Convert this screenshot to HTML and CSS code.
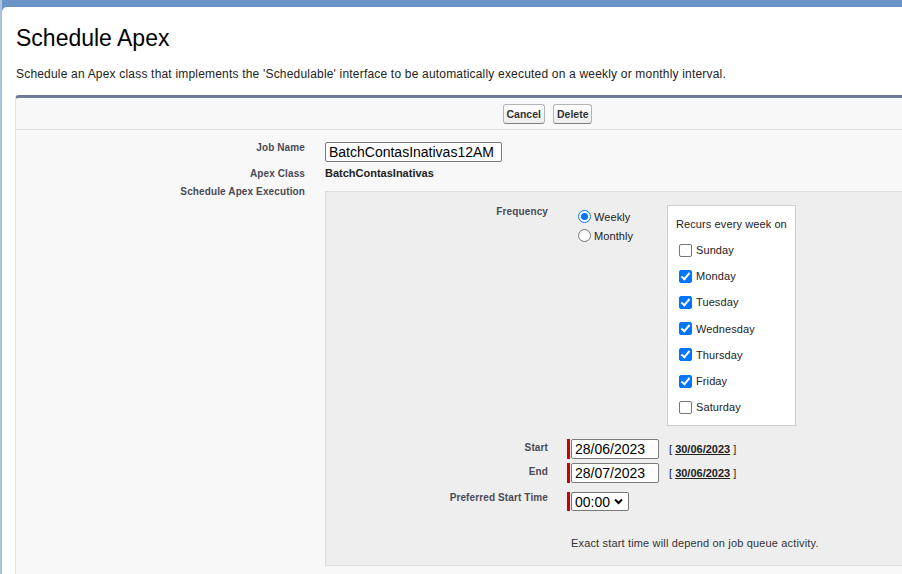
FILE: index.html
```html
<!DOCTYPE html>
<html>
<head>
<meta charset="utf-8">
<link rel="stylesheet" href="styles.css">
</head>
<body>
<div class="frame">
  <div class="page">
    <h1 class="title">Schedule Apex</h1>
    <p class="desc">Schedule an Apex class that implements the 'Schedulable' interface to be automatically executed on a weekly or monthly interval.</p>
    <div class="block">
      <div class="btn-row">
        <button class="btn">Cancel</button>
        <button class="btn">Delete</button>
      </div>
      <div class="form">
        <div class="lbl row-job">Job Name</div>
        <div class="data row-job"><input class="txt job" type="text" value="BatchContasInativas12AM"></div>
        <div class="lbl row-class">Apex Class</div>
        <div class="data row-class"><span class="val">BatchContasInativas</span></div>
        <div class="lbl row-exec">Schedule Apex Execution</div>
        <div class="data row-exec">
          <div class="exec">
            <div class="ilbl freq-lbl">Frequency</div>
            <div class="idata freq">
              <div class="radios">
                <label class="radio"><span class="rb on"></span>Weekly</label>
                <label class="radio"><span class="rb"></span>Monthly</label>
              </div>
              <div class="recurs">
                <div class="recurs-title">Recurs every week on</div>
                <label class="day"><span class="cb"></span>Sunday</label>
                <label class="day"><span class="cb on"></span>Monday</label>
                <label class="day"><span class="cb on"></span>Tuesday</label>
                <label class="day"><span class="cb on"></span>Wednesday</label>
                <label class="day"><span class="cb on"></span>Thursday</label>
                <label class="day"><span class="cb on"></span>Friday</label>
                <label class="day"><span class="cb"></span>Saturday</label>
              </div>
            </div>
            <div class="ilbl start-lbl">Start</div>
            <div class="idata dated start">
              <span class="req"></span><input class="txt date" type="text" value="28/06/2023">
              <span class="today">[&nbsp;<a href="#">30/06/2023</a>&nbsp;]</span>
            </div>
            <div class="ilbl end-lbl">End</div>
            <div class="idata dated end">
              <span class="req"></span><input class="txt date" type="text" value="28/07/2023">
              <span class="today">[&nbsp;<a href="#">30/06/2023</a>&nbsp;]</span>
            </div>
            <div class="ilbl time-lbl">Preferred Start Time</div>
            <div class="idata dated time">
              <span class="req tall"></span>
              <div class="sel">00:00<svg class="chev" width="9" height="7" viewBox="0 0 9 7"><path d="M1 1.5 L4.5 5 L8 1.5" fill="none" stroke="#000" stroke-width="2"/></svg></div>
            </div>
            <div class="ilbl"></div>
            <div class="idata note">Exact start time will depend on job queue activity.</div>
          </div>
        </div>
      </div>
    </div>
  </div>
</div>
</body>
</html>
```
FILE: styles.css
```css
html, body { margin: 0; padding: 0; }
body {
  width: 902px;
  height: 574px;
  overflow: hidden;
  font-family: "Liberation Sans", Arial, sans-serif;
  color: #222;
  background: #6a94c6;
}
.frame {
  height: 574px;
  padding-top: 7px;
  box-sizing: border-box;
  background: linear-gradient(to right, #a9c2e4 0, #a9c2e4 2px, transparent 2px);
}
.page {
  margin-left: 2px;
  height: 567px;
  background: #fff;
  border-top-left-radius: 5px;
  padding-left: 13px;
}
.title {
  margin: 0;
  padding-top: 18px;
  font-weight: normal;
  font-size: 23px;
  line-height: 26px;
  color: #000;
  padding-left: 1px;
}
.desc {
  margin: 0;
  padding-top: 16px;
  font-size: 12px;
  line-height: 14px;
  letter-spacing: 0.19px;
  color: #222;
  padding-left: 1px;
}
.block {
  margin-top: 14px;
  background: #f8f8f8;
  border-top: 3px solid #6e7b97;
  border-left: 1px solid #e2e4e6;
  border-top-left-radius: 4px;
  height: 480px;
}
.btn-row {
  display: flex;
  justify-content: center;
  gap: 8px;
  padding: 6px 0 5px 177px;
  border-bottom: 1px solid #dedede;
}
.btn {
  font-family: "Liberation Sans", Arial, sans-serif;
  font-weight: bold;
  font-size: 10.5px;
  color: #333;
  padding: 0 3px;
  height: 20px;
  background: linear-gradient(#fff, #ececec);
  border: 1px solid #b5b5b5;
  border-bottom-color: #7f7f7f;
  border-radius: 3px;
}
.form {
  display: grid;
  grid-template-columns: 299px 1fr;
  padding-top: 12px;
}
.lbl {
  text-align: right;
  padding-right: 10px;
  font-size: 10px;
  letter-spacing: 0.12px;
  font-weight: bold;
  color: #4a4a56;
}
.data { padding-left: 10px; }
.row-job.lbl { padding-top: 0; }
.row-job.data { height: 25px; }
.txt {
  font-family: "Liberation Sans", Arial, sans-serif;
  font-size: 14px;
  color: #000;
  border: 1px solid #7a7a7a;
  border-radius: 2px;
  padding: 0 3px;
  height: 20px;
  box-sizing: border-box;
  background: #fff;
  margin: 0;
}
.job { width: 177px; }
.row-class { height: 18px; }
.row-class.lbl { padding-top: 1px; }
.val {
  display: block;
  padding-top: 0;
  font-size: 11px;
  line-height: 12px;
  font-weight: bold;
  color: #222;
}
.exec {
  margin-top: 5px;
  background: #eeeeee;
  border: 1px solid #dcdcdc;
  border-right: none;
  height: 375px;
  box-sizing: border-box;
  display: grid;
  grid-template-columns: 232px 1fr;
  align-content: start;
}
.ilbl {
  text-align: right;
  padding-right: 10px;
  font-size: 10px;
  letter-spacing: 0.12px;
  font-weight: bold;
  color: #4a4a56;
}
.idata { padding-left: 9px; }
.freq-lbl { padding-top: 14px; }
.freq { display: flex; padding-top: 14px; }
.radios { width: 89px; padding-left: 11px; display: flex; flex-direction: column; gap: 2px; padding-top: 2px; }
.radio, .day {
  display: flex;
  align-items: center;
  font-size: 11px;
  letter-spacing: 0.1px;
  color: #222;
  height: 17px;
}
.rb {
  width: 11px;
  height: 11px;
  border: 1px solid #767676;
  border-radius: 50%;
  background: #fff;
  margin-right: 3px;
  position: relative;
}
.rb.on { border-color: #0075ff; }
.rb.on::after {
  content: "";
  position: absolute;
  left: 2px; top: 2px;
  width: 7px; height: 7px;
  border-radius: 50%;
  background: #0075ff;
}
.recurs {
  background: #fff;
  border: 1px solid #cfcfcf;
  margin-top: -1px;
  padding: 10px 0 0 8px;
  box-sizing: border-box;
  width: 129px;
  height: 221px;
}
.recurs-title { font-size: 11px; letter-spacing: 0.1px; color: #222; height: 21px; line-height: 16px; }
.day { height: 26.2px; padding-left: 3px; }
.cb {
  width: 11px; height: 11px;
  border: 1px solid #767676;
  border-radius: 2px;
  background: #fff;
  margin-right: 4px;
  position: relative;
}
.cb.on { background: #0075ff; border-color: #0075ff; }
.cb.on::after {
  content: "";
  position: absolute;
  left: 3px; top: 0px;
  width: 3px; height: 7px;
  border: solid #fff;
  border-width: 0 2px 2px 0;
  transform: rotate(40deg);
}
.start-lbl { padding-top: 16px; }
.start { padding-top: 13px; }
.end-lbl { padding-top: 7px; }
.end { padding-top: 4px; }
.dated { display: flex; align-items: center; }
.req { width: 3px; height: 20px; background: #c00; margin-right: 1px; }
.req.tall { height: 19px; }
.date { width: 88px; height: 20px; }
.today { font-size: 11px; color: #222; margin-left: 10px; }
.today a { color: #222; font-weight: bold; text-decoration: underline; }
.time-lbl { padding-top: 9px; }
.time { padding-top: 9px; }
.sel {
  display: flex;
  align-items: center;
  gap: 4px;
  height: 19px;
  box-sizing: border-box;
  border: 1px solid #767676;
  border-radius: 2px;
  background: #fff;
  padding: 0 3px 0 3px;
  font-size: 14px;
  color: #000;
  width: 58px;
}
.note { padding-top: 26px; font-size: 11px; letter-spacing: 0.16px; color: #333; padding-left: 13px; }
```
